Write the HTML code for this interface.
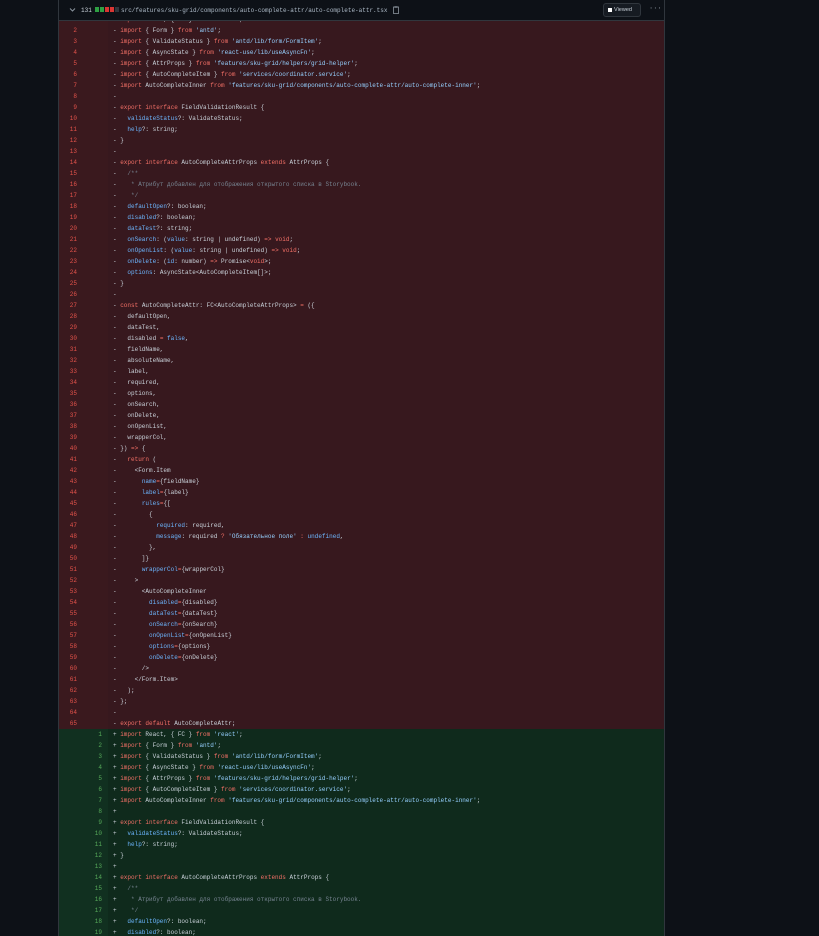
<!DOCTYPE html>
<html><head><meta charset="utf-8"><style>
*{margin:0;padding:0;box-sizing:border-box}
body{width:819px;height:936px;background:#0d1117;overflow:hidden;font-family:"Liberation Mono",monospace;position:relative}
#box{position:absolute;left:58px;top:0;width:607px;height:936px;border-left:1px solid #30363d;border-right:1px solid #30363d;overflow:hidden;background:#0d1117}
#hdr{position:absolute;left:0;top:0;width:100%;height:21px;background:#0d1117;border-bottom:1px solid #30363d;z-index:2;font-size:6px;color:#c9d1d9}
#rows{position:absolute;left:0;top:13.5px;width:100%}
.r{height:11px;line-height:11px;display:flex;font-size:6px;white-space:pre;color:#c9d1d9}
.r .o,.r .n{width:25px;text-align:right;padding-right:6px}
.r .o{width:24px;padding-right:6px}
.r .x{flex:1;padding-left:5px}
.d .o,.d .n{background:#3a191e;color:#e5534b}
.d .x{background:#37181e}
.a .o,.a .n{background:#113020;color:#57ab5a}
.a .x{background:#0f2a1c}
.k{color:#f47067}.s{color:#96d0ff}.p{color:#6cb6ff}.c{color:#768390}.f{color:#d2a8ff}
</style></head><body>
<div id="box">
<div id="hdr">
<svg style="position:absolute;left:10px;top:7px" width="7" height="6" viewBox="0 0 7 6"><path d="M1 1.5 L3.5 4 L6 1.5" stroke="#8b949e" fill="none" stroke-width="1"/></svg>
<span style="position:absolute;left:22px;top:7px;line-height:7px;color:#c9d1d9">131</span>
<div style="position:absolute;left:36px;top:7px;display:flex;gap:1px">
<i style="width:4px;height:5px;background:#2ea043"></i><i style="width:4px;height:5px;background:#2ea043"></i><i style="width:4px;height:5px;background:#da3633"></i><i style="width:4px;height:5px;background:#da3633"></i><i style="width:4px;height:5px;background:#30363d"></i></div>
<span style="position:absolute;left:62px;top:7px;line-height:7px;color:#adbac7">src/features/sku-grid/components/auto-complete-attr/auto-complete-attr.tsx</span>
<svg style="position:absolute;left:334px;top:6px" width="6" height="8" viewBox="0 0 6 8"><rect x="0.5" y="1" width="5" height="6.5" fill="none" stroke="#8b949e" stroke-width="0.8"/><rect x="1.5" y="0.3" width="3" height="1.4" fill="#8b949e"/></svg>
<div style="position:absolute;left:544px;top:3px;width:38px;height:14px;border:1px solid #30363d;border-radius:3px;background:#161b22;font-family:'Liberation Sans',sans-serif;font-size:5.5px;color:#c9d1d9;line-height:12px;padding-left:4px"><i style="display:inline-block;width:4px;height:4px;background:#fff;vertical-align:-0.5px;margin-right:2px"></i>Viewed</div>
<span style="position:absolute;left:590px;top:6px;line-height:6px;color:#8b949e;font-size:7px">···</span>
</div>
<div id="rows">
<div class="r d"><span class="o">1</span><span class="n"></span><span class="x">- <span class="k">import</span> React, { FC } <span class="k">from</span> <span class="s">'react'</span>;</span></div>
<div class="r d"><span class="o">2</span><span class="n"></span><span class="x">- <span class="k">import</span> { Form } <span class="k">from</span> <span class="s">'antd'</span>;</span></div>
<div class="r d"><span class="o">3</span><span class="n"></span><span class="x">- <span class="k">import</span> { ValidateStatus } <span class="k">from</span> <span class="s">'antd/lib/form/FormItem'</span>;</span></div>
<div class="r d"><span class="o">4</span><span class="n"></span><span class="x">- <span class="k">import</span> { AsyncState } <span class="k">from</span> <span class="s">'react-use/lib/useAsyncFn'</span>;</span></div>
<div class="r d"><span class="o">5</span><span class="n"></span><span class="x">- <span class="k">import</span> { AttrProps } <span class="k">from</span> <span class="s">'features/sku-grid/helpers/grid-helper'</span>;</span></div>
<div class="r d"><span class="o">6</span><span class="n"></span><span class="x">- <span class="k">import</span> { AutoCompleteItem } <span class="k">from</span> <span class="s">'services/coordinator.service'</span>;</span></div>
<div class="r d"><span class="o">7</span><span class="n"></span><span class="x">- <span class="k">import</span> AutoCompleteInner <span class="k">from</span> <span class="s">'features/sku-grid/components/auto-complete-attr/auto-complete-inner'</span>;</span></div>
<div class="r d"><span class="o">8</span><span class="n"></span><span class="x">-</span></div>
<div class="r d"><span class="o">9</span><span class="n"></span><span class="x">- <span class="k">export</span> <span class="k">interface</span> FieldValidationResult {</span></div>
<div class="r d"><span class="o">10</span><span class="n"></span><span class="x">-   <span class="p">validateStatus</span>?: ValidateStatus;</span></div>
<div class="r d"><span class="o">11</span><span class="n"></span><span class="x">-   <span class="p">help</span>?: string;</span></div>
<div class="r d"><span class="o">12</span><span class="n"></span><span class="x">- }</span></div>
<div class="r d"><span class="o">13</span><span class="n"></span><span class="x">-</span></div>
<div class="r d"><span class="o">14</span><span class="n"></span><span class="x">- <span class="k">export</span> <span class="k">interface</span> AutoCompleteAttrProps <span class="k">extends</span> AttrProps {</span></div>
<div class="r d"><span class="o">15</span><span class="n"></span><span class="x">-   <span class="c">/**</span></span></div>
<div class="r d"><span class="o">16</span><span class="n"></span><span class="x">-    <span class="c">* Атрибут добавлен для отображения открытого списка в Storybook.</span></span></div>
<div class="r d"><span class="o">17</span><span class="n"></span><span class="x">-    <span class="c">*/</span></span></div>
<div class="r d"><span class="o">18</span><span class="n"></span><span class="x">-   <span class="p">defaultOpen</span>?: boolean;</span></div>
<div class="r d"><span class="o">19</span><span class="n"></span><span class="x">-   <span class="p">disabled</span>?: boolean;</span></div>
<div class="r d"><span class="o">20</span><span class="n"></span><span class="x">-   <span class="p">dataTest</span>?: string;</span></div>
<div class="r d"><span class="o">21</span><span class="n"></span><span class="x">-   <span class="p">onSearch</span>: (<span class="p">value</span>: string | undefined) <span class="k">=&gt;</span> <span class="k">void</span>;</span></div>
<div class="r d"><span class="o">22</span><span class="n"></span><span class="x">-   <span class="p">onOpenList</span>: (<span class="p">value</span>: string | undefined) <span class="k">=&gt;</span> <span class="k">void</span>;</span></div>
<div class="r d"><span class="o">23</span><span class="n"></span><span class="x">-   <span class="p">onDelete</span>: (<span class="p">id</span>: number) <span class="k">=&gt;</span> Promise&lt;<span class="k">void</span>&gt;;</span></div>
<div class="r d"><span class="o">24</span><span class="n"></span><span class="x">-   <span class="p">options</span>: AsyncState&lt;AutoCompleteItem[]&gt;;</span></div>
<div class="r d"><span class="o">25</span><span class="n"></span><span class="x">- }</span></div>
<div class="r d"><span class="o">26</span><span class="n"></span><span class="x">-</span></div>
<div class="r d"><span class="o">27</span><span class="n"></span><span class="x">- <span class="k">const</span> AutoCompleteAttr: FC&lt;AutoCompleteAttrProps&gt; <span class="k">=</span> ({</span></div>
<div class="r d"><span class="o">28</span><span class="n"></span><span class="x">-   defaultOpen,</span></div>
<div class="r d"><span class="o">29</span><span class="n"></span><span class="x">-   dataTest,</span></div>
<div class="r d"><span class="o">30</span><span class="n"></span><span class="x">-   disabled <span class="k">=</span> <span class="p">false</span>,</span></div>
<div class="r d"><span class="o">31</span><span class="n"></span><span class="x">-   fieldName,</span></div>
<div class="r d"><span class="o">32</span><span class="n"></span><span class="x">-   absoluteName,</span></div>
<div class="r d"><span class="o">33</span><span class="n"></span><span class="x">-   label,</span></div>
<div class="r d"><span class="o">34</span><span class="n"></span><span class="x">-   required,</span></div>
<div class="r d"><span class="o">35</span><span class="n"></span><span class="x">-   options,</span></div>
<div class="r d"><span class="o">36</span><span class="n"></span><span class="x">-   onSearch,</span></div>
<div class="r d"><span class="o">37</span><span class="n"></span><span class="x">-   onDelete,</span></div>
<div class="r d"><span class="o">38</span><span class="n"></span><span class="x">-   onOpenList,</span></div>
<div class="r d"><span class="o">39</span><span class="n"></span><span class="x">-   wrapperCol,</span></div>
<div class="r d"><span class="o">40</span><span class="n"></span><span class="x">- }) <span class="k">=&gt;</span> {</span></div>
<div class="r d"><span class="o">41</span><span class="n"></span><span class="x">-   <span class="k">return</span> (</span></div>
<div class="r d"><span class="o">42</span><span class="n"></span><span class="x">-     &lt;Form.Item</span></div>
<div class="r d"><span class="o">43</span><span class="n"></span><span class="x">-       <span class="p">name</span><span class="k">=</span>{fieldName}</span></div>
<div class="r d"><span class="o">44</span><span class="n"></span><span class="x">-       <span class="p">label</span><span class="k">=</span>{label}</span></div>
<div class="r d"><span class="o">45</span><span class="n"></span><span class="x">-       <span class="p">rules</span><span class="k">=</span>{[</span></div>
<div class="r d"><span class="o">46</span><span class="n"></span><span class="x">-         {</span></div>
<div class="r d"><span class="o">47</span><span class="n"></span><span class="x">-           <span class="p">required</span>: required,</span></div>
<div class="r d"><span class="o">48</span><span class="n"></span><span class="x">-           <span class="p">message</span>: required <span class="k">?</span> <span class="s">'Обязательное поле'</span> <span class="k">:</span> <span class="p">undefined</span>,</span></div>
<div class="r d"><span class="o">49</span><span class="n"></span><span class="x">-         },</span></div>
<div class="r d"><span class="o">50</span><span class="n"></span><span class="x">-       ]}</span></div>
<div class="r d"><span class="o">51</span><span class="n"></span><span class="x">-       <span class="p">wrapperCol</span><span class="k">=</span>{wrapperCol}</span></div>
<div class="r d"><span class="o">52</span><span class="n"></span><span class="x">-     &gt;</span></div>
<div class="r d"><span class="o">53</span><span class="n"></span><span class="x">-       &lt;AutoCompleteInner</span></div>
<div class="r d"><span class="o">54</span><span class="n"></span><span class="x">-         <span class="p">disabled</span><span class="k">=</span>{disabled}</span></div>
<div class="r d"><span class="o">55</span><span class="n"></span><span class="x">-         <span class="p">dataTest</span><span class="k">=</span>{dataTest}</span></div>
<div class="r d"><span class="o">56</span><span class="n"></span><span class="x">-         <span class="p">onSearch</span><span class="k">=</span>{onSearch}</span></div>
<div class="r d"><span class="o">57</span><span class="n"></span><span class="x">-         <span class="p">onOpenList</span><span class="k">=</span>{onOpenList}</span></div>
<div class="r d"><span class="o">58</span><span class="n"></span><span class="x">-         <span class="p">options</span><span class="k">=</span>{options}</span></div>
<div class="r d"><span class="o">59</span><span class="n"></span><span class="x">-         <span class="p">onDelete</span><span class="k">=</span>{onDelete}</span></div>
<div class="r d"><span class="o">60</span><span class="n"></span><span class="x">-       /&gt;</span></div>
<div class="r d"><span class="o">61</span><span class="n"></span><span class="x">-     &lt;/Form.Item&gt;</span></div>
<div class="r d"><span class="o">62</span><span class="n"></span><span class="x">-   );</span></div>
<div class="r d"><span class="o">63</span><span class="n"></span><span class="x">- };</span></div>
<div class="r d"><span class="o">64</span><span class="n"></span><span class="x">-</span></div>
<div class="r d"><span class="o">65</span><span class="n"></span><span class="x">- <span class="k">export</span> <span class="k">default</span> AutoCompleteAttr;</span></div>
<div class="r a"><span class="o"></span><span class="n">1</span><span class="x">+ <span class="k">import</span> React, { FC } <span class="k">from</span> <span class="s">'react'</span>;</span></div>
<div class="r a"><span class="o"></span><span class="n">2</span><span class="x">+ <span class="k">import</span> { Form } <span class="k">from</span> <span class="s">'antd'</span>;</span></div>
<div class="r a"><span class="o"></span><span class="n">3</span><span class="x">+ <span class="k">import</span> { ValidateStatus } <span class="k">from</span> <span class="s">'antd/lib/form/FormItem'</span>;</span></div>
<div class="r a"><span class="o"></span><span class="n">4</span><span class="x">+ <span class="k">import</span> { AsyncState } <span class="k">from</span> <span class="s">'react-use/lib/useAsyncFn'</span>;</span></div>
<div class="r a"><span class="o"></span><span class="n">5</span><span class="x">+ <span class="k">import</span> { AttrProps } <span class="k">from</span> <span class="s">'features/sku-grid/helpers/grid-helper'</span>;</span></div>
<div class="r a"><span class="o"></span><span class="n">6</span><span class="x">+ <span class="k">import</span> { AutoCompleteItem } <span class="k">from</span> <span class="s">'services/coordinator.service'</span>;</span></div>
<div class="r a"><span class="o"></span><span class="n">7</span><span class="x">+ <span class="k">import</span> AutoCompleteInner <span class="k">from</span> <span class="s">'features/sku-grid/components/auto-complete-attr/auto-complete-inner'</span>;</span></div>
<div class="r a"><span class="o"></span><span class="n">8</span><span class="x">+</span></div>
<div class="r a"><span class="o"></span><span class="n">9</span><span class="x">+ <span class="k">export</span> <span class="k">interface</span> FieldValidationResult {</span></div>
<div class="r a"><span class="o"></span><span class="n">10</span><span class="x">+   <span class="p">validateStatus</span>?: ValidateStatus;</span></div>
<div class="r a"><span class="o"></span><span class="n">11</span><span class="x">+   <span class="p">help</span>?: string;</span></div>
<div class="r a"><span class="o"></span><span class="n">12</span><span class="x">+ }</span></div>
<div class="r a"><span class="o"></span><span class="n">13</span><span class="x">+</span></div>
<div class="r a"><span class="o"></span><span class="n">14</span><span class="x">+ <span class="k">export</span> <span class="k">interface</span> AutoCompleteAttrProps <span class="k">extends</span> AttrProps {</span></div>
<div class="r a"><span class="o"></span><span class="n">15</span><span class="x">+   <span class="c">/**</span></span></div>
<div class="r a"><span class="o"></span><span class="n">16</span><span class="x">+    <span class="c">* Атрибут добавлен для отображения открытого списка в Storybook.</span></span></div>
<div class="r a"><span class="o"></span><span class="n">17</span><span class="x">+    <span class="c">*/</span></span></div>
<div class="r a"><span class="o"></span><span class="n">18</span><span class="x">+   <span class="p">defaultOpen</span>?: boolean;</span></div>
<div class="r a"><span class="o"></span><span class="n">19</span><span class="x">+   <span class="p">disabled</span>?: boolean;</span></div>
</div>
</div>
</body></html>
